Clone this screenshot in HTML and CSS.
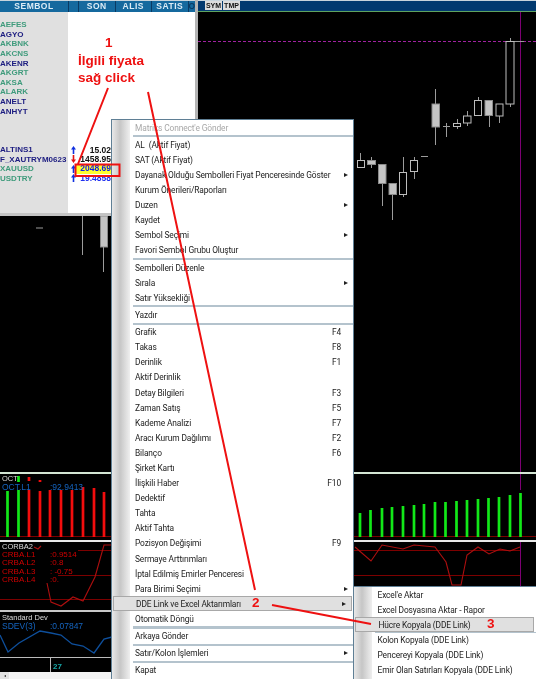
FILE: index.html
```html
<!DOCTYPE html>
<html lang="tr">
<head>
  <meta charset="UTF-8">
  <meta name="viewport" content="width=device-width, initial-scale=1.0">
  <title>Matriks</title>
  <link rel="stylesheet" href="styles.css">
</head>
<body>
<div class="screen">

  <!-- Upper area: watch list on the left, price chart on the right -->
  <div class="top">
    <div class="left-col">
      <div class="watch">
        <div class="watch-head">
          <div class="col col-sym">SEMBOL</div>
          <div class="col col-arrow"></div>
          <div class="col col-num">SON</div>
          <div class="col col-num">ALIS</div>
          <div class="col col-num">SATIS</div>
          <div class="col col-end">O</div>
        </div>
        <div class="watch-body">
          <div class="row"><span class="sym green">AEFES</span></div>
          <div class="row"><span class="sym navy">AGYO</span></div>
          <div class="row"><span class="sym green">AKBNK</span></div>
          <div class="row"><span class="sym green">AKCNS</span></div>
          <div class="row"><span class="sym navy">AKENR</span></div>
          <div class="row"><span class="sym green">AKGRT</span></div>
          <div class="row"><span class="sym green">AKSA</span></div>
          <div class="row"><span class="sym green">ALARK</span></div>
          <div class="row"><span class="sym navy">ANELT</span></div>
          <div class="row"><span class="sym navy">ANHYT</span></div>
          <div class="row"></div>
          <div class="row"></div>
          <div class="row"></div>
          <div class="row">
            <span class="sym navy">ALTINS1</span>
            <svg class="arrow up" viewBox="0 0 5 8"><path d="M2.500 0 5 3.500H3.300V8H1.700V3.500H0Z"/></svg>
            <span class="price">15.02</span>
          </div>
          <div class="row">
            <span class="sym navy">F_XAUTRYM0623</span>
            <svg class="arrow down" viewBox="0 0 5 8"><path d="M2.500 8 5 4.500H3.300V0H1.700V4.500H0Z"/></svg>
            <span class="price">1458.95</span>
          </div>
          <div class="row">
            <span class="sym green">XAUUSD</span>
            <svg class="arrow up" viewBox="0 0 5 8"><path d="M2.500 0 5 3.500H3.300V8H1.700V3.500H0Z"/></svg>
            <span class="price hot">2048.69</span>
          </div>
          <div class="row">
            <span class="sym green">USDTRY</span>
            <svg class="arrow up" viewBox="0 0 5 8"><path d="M2.500 0 5 3.500H3.300V8H1.700V3.500H0Z"/></svg>
            <span class="price blue">19.4858</span>
          </div>
        </div>
      </div>
      <svg class="left-chart" viewBox="0 216 198 256">
        <path class="wick" d="M36 228H43M82.500 216V255M103.500 247V272"/>
        <rect class="body-full" x="100.500" y="216" width="7" height="31"/>
      </svg>
    </div>
    <div class="chart">
      <div class="chart-head">
        <span class="chip">SYM</span>
        <span class="chip">TMP</span>
      </div>
      <svg class="price-chart" viewBox="198 12 338 460">
        <path class="cursor" d="M520.500 12V472"/>
        <path class="cursor dashed" d="M198 41.500H536"/>
        <path class="wick" d="M360.500 153V160M371.500 157V168M382.500 183V206M392.500 195V220M403.500 157V197M414.500 157V179M421 156.500H428M435.500 89V145M446.500 123V137M443 126.500H450M457.500 119V129M467.500 111V126M478.500 97V100M489.500 116V127M499.500 116V123M510.500 38V107M510 41.500H524"/>
        <rect class="body-open" x="357.500" y="160.500" width="7" height="7"/>
        <rect class="body-full" x="367.500" y="160.500" width="8" height="4"/>
        <rect class="body-full" x="378.500" y="164.500" width="7.500" height="19"/>
        <rect class="body-full" x="389" y="183.500" width="7.500" height="11"/>
        <rect class="body-open" x="399.500" y="172.500" width="7" height="22"/>
        <rect class="body-open" x="410.500" y="160.500" width="7" height="11"/>
        <rect class="body-full" x="432" y="104" width="7.500" height="23"/>
        <rect class="body-open" x="453.500" y="123.500" width="7" height="3"/>
        <rect class="body-open" x="463.500" y="116" width="7.500" height="7"/>
        <rect class="body-open" x="474.500" y="100.500" width="7" height="15"/>
        <rect class="body-full" x="485" y="100.500" width="7.500" height="15"/>
        <rect class="body-open" x="496" y="104" width="7" height="12"/>
        <rect class="body-open" x="506" y="41.500" width="8" height="62.500"/>
      </svg>
    </div>
  </div>

  <!-- Indicator panes -->
  <div class="pane pane-oct">
    <svg viewBox="0 474 536 66">
      <path class="base" d="M0 536.500H536"/>
      <path class="bar-green" d="M7.500 537V491M18.500 537V490M18.500 476V482M360 537V513M370.500 537V510M382 537V508M392 537V507M403 537V506M414 537V505M424 537V504M435 537V502M445.500 537V502M456.500 537V501M467 537V500M478 537V499M488.500 537V498M499 537V497M510 537V495M520.500 537V493"/>
      <path class="bar-red" d="M29 537V490M29 477V481M40 537V491M40 480V482M50 537V490M61 537V490M72 537V490M83 537V487M94 537V488M104 537V492"/>
      <path class="cursor" d="M520.500 474V490"/>
    </svg>
    <div class="pane-title">OCT</div>
    <div class="legend legend-blue"><span>OCT.L1</span><span>:92.9413</span></div>
  </div>
  <div class="pane pane-corba">
    <svg viewBox="0 542 536 68">
      <path class="level" d="M78 550.500H520M58 575.500H520M0 599.500H536"/>
      <path class="curve-red" d="M47 583 51 602 61 606 73 597 83 601 95 577 104 545 112 545M355 547 371 561 382 545 403 549 414 545 435 547 446 562 452 585 461 585 467 555 478 547 489 554 500 549 510 551 520 547M34 547 38 549 41 546"/>
      <path class="cursor" d="M520.500 542V610"/>
    </svg>
    <div class="pane-title">CORBA2</div>
    <div class="legend legend-red"><span>CRBA.L1</span><span>:0.9514</span></div>
    <div class="legend legend-red"><span>CRBA.L2</span><span>:0.8</span></div>
    <div class="legend legend-red"><span>CRBA.L3</span><span>: -0.75</span></div>
    <div class="legend legend-red"><span>CRBA.L4</span><span>:0.</span></div>
  </div>
  <div class="pane pane-sdev">
    <svg viewBox="0 612 536 45">
      <path class="curve-blue" d="M0 635 8 652 19 643 40 631 51 633 61 635 72 644 83 646 94 653 104 639 112 637"/>
    </svg>
    <div class="pane-title">Standard Dev</div>
    <div class="legend legend-blue"><span>SDEV(3)</span><span>:0.07847</span></div>
  </div>
  <div class="pane pane-time">
    <span class="tick">27</span>
  </div>
  <div class="hscroll"><span class="hscroll-btn"></span></div>

  <!-- Context menu -->
  <div class="menu menu-main">
    <div class="item disabled">Matriks Connect'e Gönder</div>
    <div class="sep"></div>
    <div class="item">AL&nbsp; (Aktif Fiyat)</div>
    <div class="item">SAT (Aktif Fiyat)</div>
    <div class="item">Dayanak Olduğu Sembolleri Fiyat Penceresinde Göster<i class="more"></i></div>
    <div class="item">Kurum Önerileri/Raporları</div>
    <div class="item">Duzen<i class="more"></i></div>
    <div class="item">Kaydet</div>
    <div class="item">Sembol Seçimi<i class="more"></i></div>
    <div class="item">Favori Sembol Grubu Oluştur</div>
    <div class="sep"></div>
    <div class="item">Sembolleri Düzenle</div>
    <div class="item">Sırala<i class="more"></i></div>
    <div class="item">Satır Yüksekliği</div>
    <div class="sep"></div>
    <div class="item">Yazdır</div>
    <div class="sep"></div>
    <div class="item">Grafik<span class="key">F4</span></div>
    <div class="item">Takas<span class="key">F8</span></div>
    <div class="item">Derinlik<span class="key">F1</span></div>
    <div class="item">Aktif Derinlik</div>
    <div class="item">Detay Bilgileri<span class="key">F3</span></div>
    <div class="item">Zaman Satış<span class="key">F5</span></div>
    <div class="item">Kademe Analizi<span class="key">F7</span></div>
    <div class="item">Aracı Kurum Dağılımı<span class="key">F2</span></div>
    <div class="item">Bilanço<span class="key">F6</span></div>
    <div class="item">Şirket Kartı</div>
    <div class="item">İlişkili Haber<span class="key">F10</span></div>
    <div class="item">Dedektif</div>
    <div class="item">Tahta</div>
    <div class="item">Aktif Tahta</div>
    <div class="item">Pozisyon Değişimi<span class="key">F9</span></div>
    <div class="item">Sermaye Arttırımları</div>
    <div class="item">İptal Edilmiş Emirler Penceresi</div>
    <div class="item">Para Birimi Seçimi<i class="more"></i></div>
    <div class="item active">DDE Link ve Excel Aktarımları<i class="more"></i></div>
    <div class="item">Otomatik Döngü</div>
    <div class="sep"></div>
    <div class="item">Arkaya Gönder</div>
    <div class="sep"></div>
    <div class="item">Satır/Kolon İşlemleri<i class="more"></i></div>
    <div class="sep"></div>
    <div class="item">Kapat</div>
  </div>

  <!-- Submenu -->
  <div class="menu menu-sub">
    <div class="item">Excel'e Aktar</div>
    <div class="item">Excel Dosyasına Aktar - Rapor</div>
    <div class="item active">Hücre Kopyala (DDE Link)</div>
    <div class="sep"></div>
    <div class="item">Kolon Kopyala (DDE Link)</div>
    <div class="item">Pencereyi Kopyala (DDE Link)</div>
    <div class="item">Emir Olan Satırları Kopyala (DDE Link)</div>
  </div>

  <!-- Red hand-drawn notes over the screenshot -->
  <svg class="notes" viewBox="0 0 536 679">
    <rect x="75.500" y="164.500" width="44" height="11.500"/>
    <path d="M108 88 78 164M148 92 255 590M272 605 371 624"/>
  </svg>
  <div class="note note-1">
    <span>1</span>
    <span>İlgili fiyata</span>
    <span>sağ click</span>
  </div>
  <div class="note note-2">2</div>
  <div class="note note-3">3</div>

</div>
</body>
</html>
```

FILE: styles.css
```css
* {
  box-sizing: border-box;
}
body {
  margin: 0;
  background-color: black;
}
svg {
  display: block;
}

.screen {
  position: relative;
  width: 536px;
  height: 679px;
  overflow: hidden;
  background-color: black;
  font-family: "Liberation Sans", Arial, sans-serif;
  filter: blur(0.4px);
}

.top {
  display: flex;
  height: 472px;
}
.left-col {
  display: flex;
  flex-direction: column;
  width: 198px;
}

/* Watch list */
.watch {
  height: 216px;
  border-right: 3px solid #b4b4b4;
  border-bottom: 3px solid #c4c4c4;
  background-color: white;
}
.watch-head {
  display: flex;
  height: 12px;
  border-top: 1px solid #c8d4dc;
  background-color: #0a3a63;
  gap: 1px;
}
.col {
  background-color: #15699e;
  color: #dcecf6;
  font-size: 8.5px;
  font-weight: bold;
  line-height: 11px;
  text-align: center;
  letter-spacing: 0.5px;
}
.col-sym {
  width: 68px;
}
.col-arrow {
  width: 9px;
}
.col-num {
  width: 35.500px;
}
.col-end {
  width: 6px;
  color: #0a3a63;
}
.watch-body {
  height: 201px;
  padding-top: 8px;
  background: linear-gradient(90deg, #e0e0e0 68px, white 68px);
}
.row {
  display: flex;
  align-items: center;
  height: 9.6px;
  font-size: 8px;
  font-weight: bold;
  white-space: nowrap;
}
.sym {
  width: 71px;
}
.green {
  color: #3f9b7c;
}
.navy {
  color: #1c1c80;
}
.arrow {
  width: 5px;
  height: 8px;
  flex: none;
}
.arrow.up {
  fill: #1030e0;
}
.arrow.down {
  fill: #e01010;
}
.price {
  width: 35px;
  color: #111;
  font-size: 8.5px;
  text-align: right;
}
.price.hot {
  width: 43px;
  height: 9.6px;
  padding-right: 8px;
  background-color: #ffff30;
  color: #1020e0;
  line-height: 9.6px;
}
.price.blue {
  color: #2030f0;
}

/* Price chart */
.left-chart {
  flex: 1;
  width: 198px;
  background-color: black;
}
.chart {
  flex: 1;
  display: flex;
  flex-direction: column;
}
.chart-head {
  display: flex;
  align-items: flex-start;
  height: 12px;
  padding-left: 7px;
  gap: 1px;
  border-top: 1px solid #c8d4dc;
  border-bottom: 1px solid #5fa35f;
  background-color: #023a70;
}
.chip {
  width: 17px;
  height: 9px;
  background-color: #dcdcdc;
  color: #111;
  font-size: 7px;
  font-weight: bold;
  line-height: 9px;
  text-align: center;
}
.price-chart {
  width: 338px;
  height: 460px;
}
.wick {
  fill: none;
  stroke: #9c9c9c;
  stroke-width: 1;
}
.body-open {
  fill: black;
  stroke: #bdbdbd;
  stroke-width: 1;
}
.body-full {
  fill: #c4c4c4;
  stroke: #8a8a8a;
  stroke-width: 1;
}
.cursor {
  fill: none;
  stroke: #7d0074;
  stroke-width: 1;
}
.cursor.dashed {
  stroke: #a020a0;
  stroke-dasharray: 3 2;
}

/* Indicator panes */
.pane {
  position: relative;
  background-color: black;
  color: #ddd;
  font-size: 7.5px;
  line-height: 8px;
}
.pane svg {
  position: absolute;
  top: 0;
  left: 0;
  width: 536px;
  height: 100%;
}
.pane-title, .legend {
  position: relative;
  padding-left: 2px;
}
.pane-oct {
  height: 68px;
  padding-top: 1px;
  border-top: 2px solid #d4e6d4;
}
.pane-corba {
  height: 70px;
  padding-top: 1px;
  border-top: 2px solid #e8e8e8;
}
.pane-sdev {
  height: 47px;
  padding-top: 2px;
  border-top: 2px solid #c8c8c8;
}
.pane-time {
  height: 15px;
  border-top: 1px solid #bbb;
}
.legend {
  display: flex;
}
.legend span:first-child {
  width: 48px;
}
.legend-blue {
  color: #1565c0;
  font-size: 8.5px;
}
.legend-red {
  color: #d00000;
  font-size: 8px;
  line-height: 8.300px;
}
.base, .level {
  fill: none;
  stroke: #7c0000;
  stroke-width: 1.200;
}
.bar-green {
  fill: none;
  stroke: #12e818;
  stroke-width: 2.700;
}
.bar-red {
  fill: none;
  stroke: #f20d0d;
  stroke-width: 2.700;
}
.curve-red {
  fill: none;
  stroke: #ad0f0f;
  stroke-width: 1.100;
}
.curve-blue {
  fill: none;
  stroke: #0e4f9c;
  stroke-width: 1.300;
}
.tick {
  display: block;
  margin-left: 50px;
  padding-left: 2px;
  height: 14px;
  border-left: 1px solid #bbb;
  color: #17a7a7;
  font-size: 8px;
  font-weight: bold;
  line-height: 18px;
}
.hscroll {
  height: 7px;
  background-color: #f4f4f4;
}
.hscroll-btn {
  display: flex;
  align-items: center;
  justify-content: center;
  width: 9px;
  height: 7px;
  background-color: #e2e2e2;
}
.hscroll-btn::before {
  content: "";
  border-right: 2px solid #222;
  border-top: 1.500px solid transparent;
  border-bottom: 1.500px solid transparent;
}

/* Menus */
.menu {
  position: absolute;
  border: 1px solid #5f7f95;
  background: linear-gradient(90deg, #e8e8e8 0, #c6c6c6 8px, #efefef 18px, white 18px);
  color: #222;
  font-family: Roboto, sans-serif;
  font-size: 8.4px;
  letter-spacing: -0.12px;
}
.menu-main {
  top: 119px;
  left: 111px;
  width: 243px;
  height: 562px;
}
.menu-sub {
  top: 586px;
  left: 353px;
  width: 185px;
  height: 95px;
}
.item {
  display: flex;
  justify-content: space-between;
  align-items: center;
  height: 15.100px;
  padding-left: 23px;
  padding-right: 5px;
  white-space: nowrap;
}
.menu-sub .item {
  padding-left: 23.500px;
}
.item.disabled {
  color: #a8a8a8;
}
.item.active {
  margin: 0 1px;
  padding-left: 22px;
  border: 1px solid #a8a8a8;
  background-color: #e0e0e0;
}
.menu-sub .item.active {
  margin-right: 3px;
  padding-left: 22.500px;
}
.key {
  margin-left: auto;
  margin-right: 7px;
}
.more {
  width: 0;
  height: 0;
  border-left: 4px solid #222;
  border-top: 2.500px solid transparent;
  border-bottom: 2.500px solid transparent;
}
.sep {
  height: 2.100px;
  margin-left: 21px;
  background-color: #b4c3cd;
}
.menu-sub .sep {
  height: 1px;
  margin-bottom: -1px;
}

/* Notes */
.notes {
  position: absolute;
  top: 0;
  left: 0;
  width: 536px;
  height: 679px;
  fill: none;
  stroke: #ee1111;
  stroke-width: 2;
}
.note {
  position: absolute;
  color: #ee1111;
  font-size: 13.500px;
  font-weight: bold;
  line-height: 16px;
}
.note-1 {
  top: 35px;
  left: 78px;
  display: flex;
  flex-direction: column;
  align-items: flex-start;
  gap: 1.500px;
}
.note-1 span:first-child {
  margin-left: 27px;
}
.note-2 {
  top: 595px;
  left: 252px;
}
.note-3 {
  top: 616px;
  left: 487px;
}
```
